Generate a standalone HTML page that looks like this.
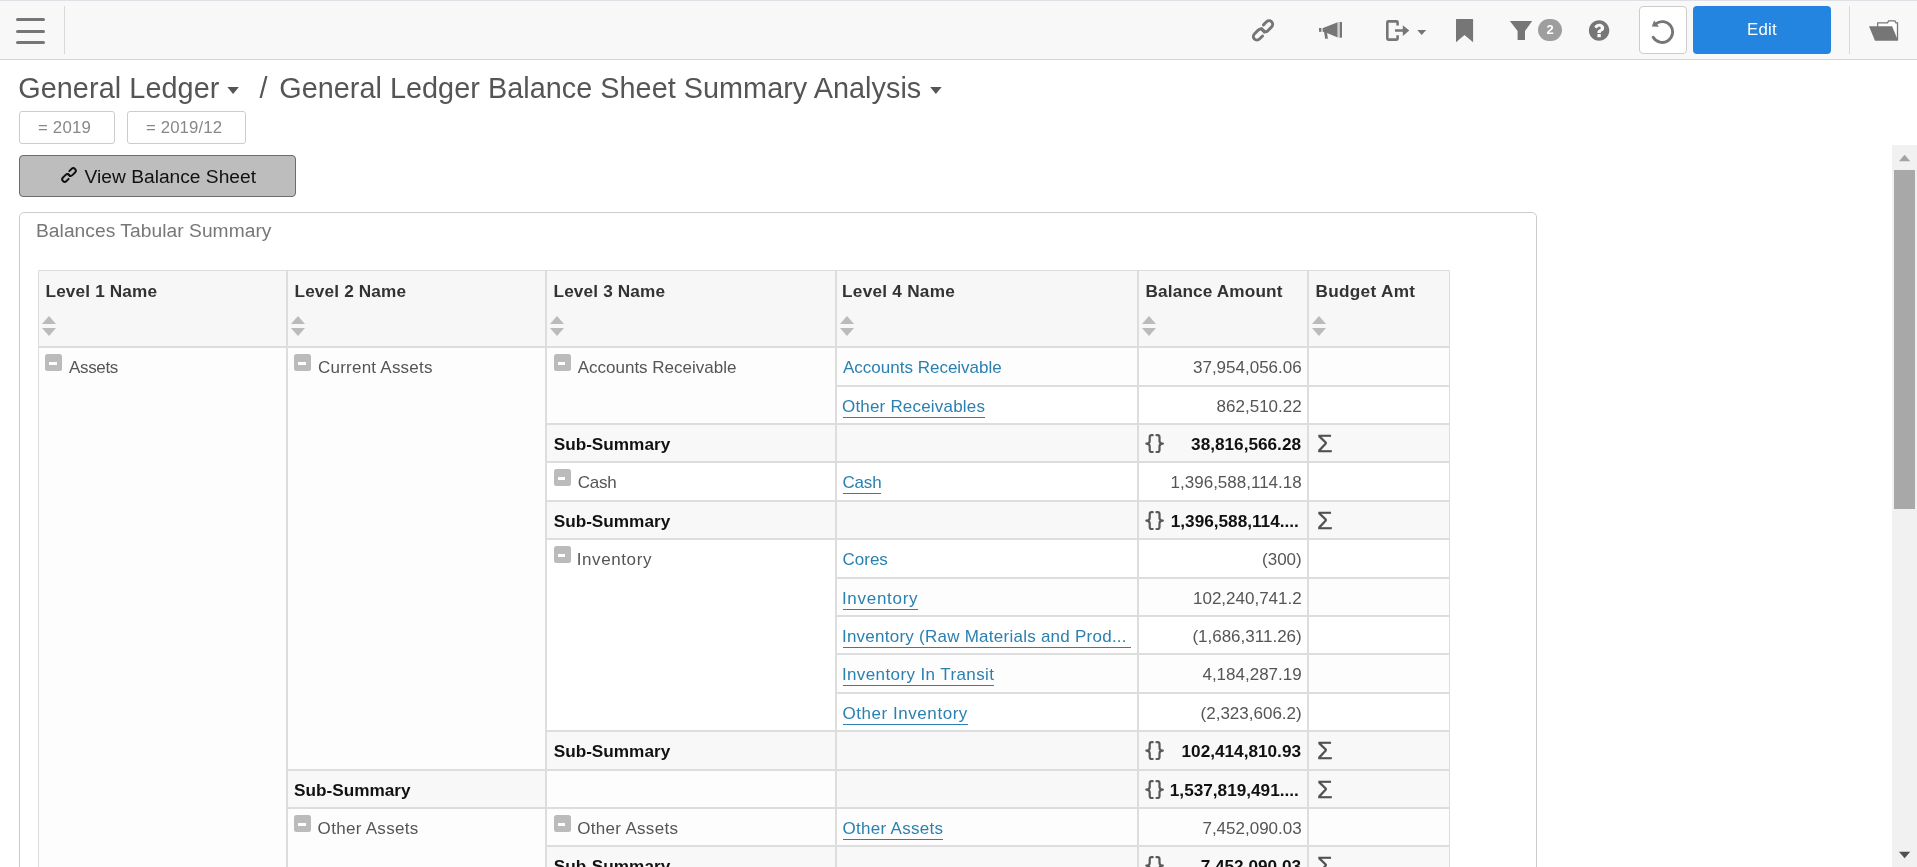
<!DOCTYPE html>
<html lang="en">
<head>
<meta charset="utf-8">
<title>General Ledger Balance Sheet Summary Analysis</title>
<style>
html,body{margin:0;padding:0;}
body{width:1917px;height:867px;overflow:hidden;background:#fff;position:relative;font-family:"Liberation Sans",sans-serif;color:#555;}
*{box-sizing:border-box;}
#grid,#title,.chip,#vbs,#edit,#ptitle,#badge{will-change:transform;}
#topbar{position:absolute;left:0;top:0;width:1917px;height:60px;background:#f8f8f8;border-top:1px solid #dfdfe6;border-bottom:1px solid #d4d4d4;}
#topbar svg{position:absolute;display:block;z-index:2;}
.vdiv{position:absolute;top:5px;width:1px;height:48px;background:#d9d9d9;}
#burger{position:absolute;left:16px;top:16px;width:29px;height:27px;}
#burger i{position:absolute;left:0;width:29px;height:3px;border-radius:2px;background:#767676;}
#reset{position:absolute;left:1639px;top:5px;width:48px;height:48px;background:#fff;border:1px solid #ccc;border-radius:4px;}
#edit{position:absolute;left:1693px;top:5px;width:138px;height:48px;background:#2385e0;border-radius:4px;color:#fff;font-size:16.8px;line-height:48px;text-align:center;letter-spacing:.3px;}
#badge{position:absolute;left:1538px;top:18px;width:24px;height:22px;border-radius:11px;background:#9e9e9e;color:#fff;font-size:13px;font-weight:bold;line-height:22px;text-align:center;}
#title{position:absolute;left:19px;top:68px;height:40px;line-height:40px;font-size:28.8px;color:#555;white-space:nowrap;}
#title span{position:absolute;top:0;white-space:nowrap;}
.caret{position:absolute;display:block;}
.chip{position:absolute;top:111px;height:33px;border:1px solid #ccc;border-radius:3px;background:#fff;color:#888;font-size:16.8px;line-height:31px;text-align:left;padding-left:18px;white-space:nowrap;}
#vbs{position:absolute;left:19px;top:155px;width:277px;height:42px;background:#bdbdbd;border:1px solid #6b6b6b;border-radius:4px;color:#111;font-size:19.2px;line-height:40px;white-space:nowrap;}
#panel{position:absolute;left:19px;top:212px;width:1518px;height:700px;border:1px solid #ccc;border-radius:5px;background:#fff;}
#ptitle{letter-spacing:.05px;position:absolute;left:16px;top:6px;font-size:19.2px;line-height:24px;color:#777;white-space:nowrap;}
#sb{position:absolute;left:1892px;top:145px;width:25px;height:722px;background:#f1f1f1;}
#sb .thumb{position:absolute;left:2px;top:25px;width:21px;height:339px;background:#a8a8a8;}

#grid{position:absolute;left:18px;top:57px;width:1412px;table-layout:fixed;border-collapse:separate;border-spacing:0;font-size:17px;line-height:24px;color:#555;}
#grid th,#grid td{border:1px solid #ddd;padding:0 6px;vertical-align:top;text-align:left;white-space:nowrap;overflow:hidden;background:#fff;font-weight:normal;position:relative;}
#grid th{background:#f7f7f7;height:77px;color:#333;}
#grid tr.hd{height:77px;}
#grid tr.r38{height:38px;}
#grid tr.r39{height:39px;}
#grid td{padding-top:8px;}
#grid td.odd{background:#fdfdfd;}
#grid tr.sum td{background:#f8f8f8;color:#111;padding-top:7px;}
#grid tr.sum td.wh{background:#fdfdfd;}
#grid .hl{position:absolute;left:6.5px;top:8px;font-weight:bold;font-size:17.2px;letter-spacing:.15px;line-height:24px;}
#grid b{font-size:17.2px;}
#grid .sort{position:absolute;left:3px;top:45px;width:14px;height:20px;}
#grid .sort:before{content:"";position:absolute;left:0;top:0;border-left:7px solid transparent;border-right:7px solid transparent;border-bottom:8px solid #bbb;}
#grid .sort:after{content:"";position:absolute;left:0;top:11.5px;border-left:7px solid transparent;border-right:7px solid transparent;border-top:8px solid #bbb;}
#grid .tg{position:absolute;left:6px;top:6px;width:17px;height:17px;border-radius:2.5px;background:#bbb;}
#grid .tg:after{content:"";position:absolute;left:4.2px;top:8.2px;width:7.6px;height:2.6px;background:#fff;}
#grid .gl{position:absolute;left:30px;top:8px;}
#grid td.c3{padding-left:6.7px;}
#grid td.c3 .tg{left:6.7px;}
#grid td.c3 .gl{left:30.7px;}
#grid .num{text-align:right;padding-right:5.3px;}
#grid .num b{margin-right:.7px;}
#grid .num b.cut{margin-right:2.9px;}
#grid a.lk{color:#2a80b0;text-decoration:none;border-bottom:1.3px solid #2a80b0;display:inline-block;line-height:22px;height:22px;border-bottom-width:1px;}
#grid a.lk.nu{border-bottom-color:transparent;}
#grid .br{position:absolute;left:5px;top:8px;display:block;}
#grid .sg{-webkit-text-stroke:.3px #505050;position:absolute;left:8.2px;top:7.1px;font-size:23.4px;line-height:24px;color:#505050;transform:scaleX(1.08);transform-origin:0 0;}
</style>
</head>
<body>
<div id="topbar">
  <div id="burger"><i style="top:1px"></i><i style="top:12.5px"></i><i style="top:24px"></i></div>
  <div class="vdiv" style="left:64px"></div>
<svg id="icons" width="1917" height="60" viewBox="0 0 1917 60" style="left:0;top:-1px">
<g fill="none" stroke="#767676" stroke-width="2.9" stroke-linecap="round" transform="translate(1263,30.4) rotate(-45)">
<path d="M4.2,-3.6 L8.6,-3.6 A3.6,3.6 0 0 1 8.6,3.6 L3.2,3.6 A3.6,3.6 0 0 1 0.25,-2.06"/>
<path d="M-4.2,3.6 L-8.6,3.6 A3.6,3.6 0 0 1 -8.6,-3.6 L-3.2,-3.6 A3.6,3.6 0 0 1 -0.25,2.06"/>
</g>
<g fill="#767676">
<path d="M1323,28 L1337.7,22.2 V37.4 L1327.6,33.2 L1323,31.8 Z"/>
<rect x="1319" y="28" width="2" height="3.8"/>
<rect x="1321" y="28" width="2" height="3.8" fill="#c4c4c4"/>
<rect x="1337.7" y="22" width="2.1" height="15.6" fill="#cfcfcf"/>
<rect x="1339.8" y="22" width="2.2" height="15.7"/>
<path d="M1324,31.5 L1325.2,38.7 H1327.9 L1327,32.6 Z"/>
</g>
<path d="M1397.6,25.6 V22.4 Q1397.6,21.4 1396.6,21.4 H1388.3 Q1387.3,21.4 1387.3,22.4 V38.6 Q1387.3,39.6 1388.3,39.6 H1396.6 Q1397.6,39.6 1397.6,38.6 V35.2" fill="none" stroke="#767676" stroke-width="2.6"/>
<path d="M1395,29.2 H1402.8 V25.3 L1409.3,30.5 L1402.8,35.9 V31.85 H1395 Z" fill="#767676"/>
<path d="M1417.2,29.9 H1426.2 L1421.7,34.9 Z" fill="#767676"/>
<path d="M1456,19.6 Q1456,19.1 1456.5,19.1 H1472.6 Q1473.1,19.1 1473.1,19.6 V42.2 L1464.5,35.1 L1456,42.2 Z" fill="#767676"/>
<path d="M1509.9,20.9 H1532.2 L1525,30.9 V39.9 H1517.6 V30.9 Z" fill="#767676"/>
<path transform="translate(1588.90,40.70) scale(0.01328,-0.01328) translate(0,128)" d="M896 160C896 142 882 128 864 128H672C654 128 640 142 640 160V352C640 370 654 384 672 384H864C882 384 896 370 896 352V160ZM1152 832C1152 680 1048 622 972 579C925 552 896 503 896 480C896 462 882 448 864 448H672C654 448 640 462 640 480V516C640 613 737 696 808 728C869 756 896 782 896 834C896 878 837 919 773 919C737 919 704 907 687 895C668 881 648 863 601 803C595 795 585 791 576 791C569 791 562 793 557 797L425 897C412 907 408 925 417 939C503 1082 625 1152 788 1152C960 1152 1152 1015 1152 832ZM1536 640C1536 1064 1192 1408 768 1408C344 1408 0 1064 0 640C0 216 344 -128 768 -128C1192 -128 1536 216 1536 640Z" fill="#767676"/>
<g fill="none" stroke="#767676" stroke-width="2.9">
<path d="M1655.45,24.1 A10.4,10.4 0 1 1 1653.2,37.2" stroke-linecap="round"/>
</g>
<path d="M1654.1,20.4 L1651.8,26.6 L1659,26.8 Z" fill="#767676"/>
<path d="M1877.7,27 V22.8 H1887.6 L1888.6,20.8 H1894.9 L1895.9,22.8 H1897.5 V40" fill="#fff" stroke="#767676" stroke-width="1.3"/>
<path d="M1869,26.2 H1892.1 L1898.1,40.7 H1875 Z" fill="#767676"/>
</svg>
  <div id="badge">2</div>
  <div id="reset"></div>
  <div id="edit">Edit</div>
  <div class="vdiv" style="left:1849px"></div>
</div>
<div id="title"><span style="left:-.8px;letter-spacing:.08px">General Ledger</span><span style="left:240.5px">/</span><span style="left:260.2px;letter-spacing:.04px">General Ledger Balance Sheet Summary Analysis</span></div>
<svg class="caret" style="left:227.2px;top:86px" width="13" height="9" viewBox="0 0 13 9"><path d="M0.4,0.9 H11.8 L6.1,7.9 Z" fill="#555"/></svg>
<svg class="caret" style="left:930px;top:86px" width="13" height="9" viewBox="0 0 13 9"><path d="M0.2,0.9 H11.6 L5.9,7.9 Z" fill="#555"/></svg>
<div class="chip" style="left:19px;width:96px;letter-spacing:.2px">= 2019</div>
<div class="chip" style="left:127px;width:119px;letter-spacing:.12px">= 2019/12</div>
<div id="vbs"><svg width="20" height="20" viewBox="-10 -10 20 20" style="position:absolute;left:39px;top:9px"><g fill="none" stroke="#111" stroke-width="1.9" stroke-linecap="round" transform="rotate(-45) scale(0.7)">
<path d="M4.2,-3.6 L8.6,-3.6 A3.6,3.6 0 0 1 8.6,3.6 L3.2,3.6 A3.6,3.6 0 0 1 0.25,-2.06" stroke-width="2.7"/>
<path d="M-4.2,3.6 L-8.6,3.6 A3.6,3.6 0 0 1 -8.6,-3.6 L-3.2,-3.6 A3.6,3.6 0 0 1 -0.25,2.06" stroke-width="2.7"/>
</g></svg><span style="position:absolute;left:64.6px;top:1px">View Balance Sheet</span></div>
<div id="panel">
  <div id="ptitle">Balances Tabular Summary</div>
  <table id="grid">
    <colgroup><col style="width:249px"><col style="width:259px"><col style="width:290px"><col style="width:302px"><col style="width:170px"><col style="width:142px"></colgroup>
    <thead>
      <tr class="hd">
        <th><div class="hl">Level 1 Name</div><span class="sort"></span></th>
        <th><div class="hl">Level 2 Name</div><span class="sort"></span></th>
        <th><div class="hl">Level 3 Name</div><span class="sort"></span></th>
        <th><div class="hl" style="margin-left:-1.4px;letter-spacing:.25px">Level 4 Name</div><span class="sort"></span></th>
        <th><div class="hl">Balance Amount</div><span class="sort"></span></th>
        <th><div class="hl" style="letter-spacing:.3px">Budget Amt</div><span class="sort"></span></th>
      </tr>
    </thead>
    <tbody>
      <tr class="r39">
        <td rowspan="16" class="grp odd"><span class="tg"></span><span class="gl" style="letter-spacing:-.34px">Assets</span></td>
        <td rowspan="11" class="grp odd"><span class="tg"></span><span class="gl" style="letter-spacing:.23px">Current Assets</span></td>
        <td rowspan="2" class="c3 grp odd"><span class="tg"></span><span class="gl">Accounts Receivable</span></td>
        <td class="odd"><a class="lk nu">Accounts Receivable</a></td>
        <td class="num odd">37,954,056.06</td>
        <td class="odd"></td>
      </tr>
      <tr class="r38">
        <td><a class="lk" style="letter-spacing:.19px;text-indent:-1px">Other Receivables</a></td>
        <td class="num">862,510.22</td>
        <td></td>
      </tr>
      <tr class="r38 sum">
        <td class="c3"><b>Sub-Summary</b></td>
        <td></td>
        <td class="num"><svg class="br" width="22" height="22" viewBox="0 0 22 22"><g fill="none" stroke="#595959" stroke-width="2.2" stroke-linecap="round" stroke-linejoin="round"><path d="M8.7,2.2 H7.6 Q5.7,2.2 5.7,4.2 V8 Q5.7,10.6 2.3,10.6 Q5.7,10.6 5.7,13.2 V17 Q5.7,19 7.6,19 H8.7"/><path d="M12.5,2.2 H13.6 Q15.5,2.2 15.5,4.2 V8 Q15.5,10.6 18.9,10.6 Q15.5,10.6 15.5,13.2 V17 Q15.5,19 13.6,19 H12.5"/></g></svg><b>38,816,566.28</b></td>
        <td><span class="sg">Σ</span></td>
      </tr>
      <tr class="r39">
        <td class="c3 grp"><span class="tg"></span><span class="gl" style="letter-spacing:-.25px">Cash</span></td>
        <td><a class="lk" style="letter-spacing:-.2px;text-indent:-.5px">Cash</a></td>
        <td class="num">1,396,588,114.18</td>
        <td></td>
      </tr>
      <tr class="r38 sum">
        <td class="c3"><b>Sub-Summary</b></td>
        <td></td>
        <td class="num"><svg class="br" width="22" height="22" viewBox="0 0 22 22"><g fill="none" stroke="#595959" stroke-width="2.2" stroke-linecap="round" stroke-linejoin="round"><path d="M8.7,2.2 H7.6 Q5.7,2.2 5.7,4.2 V8 Q5.7,10.6 2.3,10.6 Q5.7,10.6 5.7,13.2 V17 Q5.7,19 7.6,19 H8.7"/><path d="M12.5,2.2 H13.6 Q15.5,2.2 15.5,4.2 V8 Q15.5,10.6 18.9,10.6 Q15.5,10.6 15.5,13.2 V17 Q15.5,19 13.6,19 H12.5"/></g></svg><b class="cut">1,396,588,114....</b></td>
        <td><span class="sg">Σ</span></td>
      </tr>
      <tr class="r39">
        <td rowspan="5" class="c3 grp"><span class="tg"></span><span class="gl" style="letter-spacing:.6px;margin-left:-1px">Inventory</span></td>
        <td><a class="lk nu" style="text-indent:-.5px">Cores</a></td>
        <td class="num">(300)</td>
        <td></td>
      </tr>
      <tr class="r38">
        <td class="odd"><a class="lk" style="letter-spacing:.71px;text-indent:-1.1px">Inventory</a></td>
        <td class="num odd">102,240,741.2</td>
        <td class="odd"></td>
      </tr>
      <tr class="r38">
        <td><a class="lk" style="letter-spacing:.25px;text-indent:-1.1px;width:287.6px">Inventory (Raw Materials and Prod...</a></td>
        <td class="num">(1,686,311.26)</td>
        <td></td>
      </tr>
      <tr class="r39">
        <td class="odd"><a class="lk" style="letter-spacing:.395px;text-indent:-1.1px">Inventory In Transit</a></td>
        <td class="num odd">4,184,287.19</td>
        <td class="odd"></td>
      </tr>
      <tr class="r38">
        <td><a class="lk" style="letter-spacing:.55px;text-indent:-.5px">Other Inventory</a></td>
        <td class="num">(2,323,606.2)</td>
        <td></td>
      </tr>
      <tr class="r39 sum">
        <td class="c3"><b>Sub-Summary</b></td>
        <td></td>
        <td class="num"><svg class="br" width="22" height="22" viewBox="0 0 22 22"><g fill="none" stroke="#595959" stroke-width="2.2" stroke-linecap="round" stroke-linejoin="round"><path d="M8.7,2.2 H7.6 Q5.7,2.2 5.7,4.2 V8 Q5.7,10.6 2.3,10.6 Q5.7,10.6 5.7,13.2 V17 Q5.7,19 7.6,19 H8.7"/><path d="M12.5,2.2 H13.6 Q15.5,2.2 15.5,4.2 V8 Q15.5,10.6 18.9,10.6 Q15.5,10.6 15.5,13.2 V17 Q15.5,19 13.6,19 H12.5"/></g></svg><b>102,414,810.93</b></td>
        <td><span class="sg">Σ</span></td>
      </tr>
      <tr class="r38 sum">
        <td><b>Sub-Summary</b></td>
        <td class="wh"></td>
        <td></td>
        <td class="num"><svg class="br" width="22" height="22" viewBox="0 0 22 22"><g fill="none" stroke="#595959" stroke-width="2.2" stroke-linecap="round" stroke-linejoin="round"><path d="M8.7,2.2 H7.6 Q5.7,2.2 5.7,4.2 V8 Q5.7,10.6 2.3,10.6 Q5.7,10.6 5.7,13.2 V17 Q5.7,19 7.6,19 H8.7"/><path d="M12.5,2.2 H13.6 Q15.5,2.2 15.5,4.2 V8 Q15.5,10.6 18.9,10.6 Q15.5,10.6 15.5,13.2 V17 Q15.5,19 13.6,19 H12.5"/></g></svg><b class="cut">1,537,819,491....</b></td>
        <td><span class="sg">Σ</span></td>
      </tr>
      <tr class="r38">
        <td rowspan="4" class="grp odd"><span class="tg"></span><span class="gl" style="letter-spacing:.3px;margin-left:-.4px">Other Assets</span></td>
        <td class="c3 grp odd"><span class="tg"></span><span class="gl" style="letter-spacing:.3px;margin-left:-.4px">Other Assets</span></td>
        <td class="odd"><a class="lk" style="letter-spacing:.3px;text-indent:-.5px">Other Assets</a></td>
        <td class="num odd">7,452,090.03</td>
        <td class="odd"></td>
      </tr>
      <tr class="r39 sum">
        <td class="c3"><b>Sub-Summary</b></td>
        <td></td>
        <td class="num"><svg class="br" width="22" height="22" viewBox="0 0 22 22"><g fill="none" stroke="#595959" stroke-width="2.2" stroke-linecap="round" stroke-linejoin="round"><path d="M8.7,2.2 H7.6 Q5.7,2.2 5.7,4.2 V8 Q5.7,10.6 2.3,10.6 Q5.7,10.6 5.7,13.2 V17 Q5.7,19 7.6,19 H8.7"/><path d="M12.5,2.2 H13.6 Q15.5,2.2 15.5,4.2 V8 Q15.5,10.6 18.9,10.6 Q15.5,10.6 15.5,13.2 V17 Q15.5,19 13.6,19 H12.5"/></g></svg><b>7,452,090.03</b></td>
        <td><span class="sg">Σ</span></td>
      </tr>
      <tr class="r38">
        <td class="c3 grp"><span class="tg"></span><span class="gl">Prepaid Expenses</span></td>
        <td><a class="lk">Prepaid Expenses</a></td>
        <td class="num">3,118,204.55</td>
        <td></td>
      </tr>
      <tr class="r38 sum">
        <td class="c3"><b>Sub-Summary</b></td>
        <td></td>
        <td class="num"><svg class="br" width="22" height="22" viewBox="0 0 22 22"><g fill="none" stroke="#595959" stroke-width="2.2" stroke-linecap="round" stroke-linejoin="round"><path d="M8.7,2.2 H7.6 Q5.7,2.2 5.7,4.2 V8 Q5.7,10.6 2.3,10.6 Q5.7,10.6 5.7,13.2 V17 Q5.7,19 7.6,19 H8.7"/><path d="M12.5,2.2 H13.6 Q15.5,2.2 15.5,4.2 V8 Q15.5,10.6 18.9,10.6 Q15.5,10.6 15.5,13.2 V17 Q15.5,19 13.6,19 H12.5"/></g></svg><b>3,118,204.55</b></td>
        <td><span class="sg">Σ</span></td>
      </tr>
    </tbody>
  </table>
</div>
<div id="sb"><div class="thumb"></div><svg width="25" height="722" viewBox="0 0 25 722" style="position:absolute;left:0;top:0;display:block"><path d="M7,16.2 H18.2 L12.6,9.8 Z" fill="#a3a3a3"/><path d="M7,706.8 H18.2 L12.6,713.2 Z" fill="#505050"/></svg></div>
</body>
</html>
